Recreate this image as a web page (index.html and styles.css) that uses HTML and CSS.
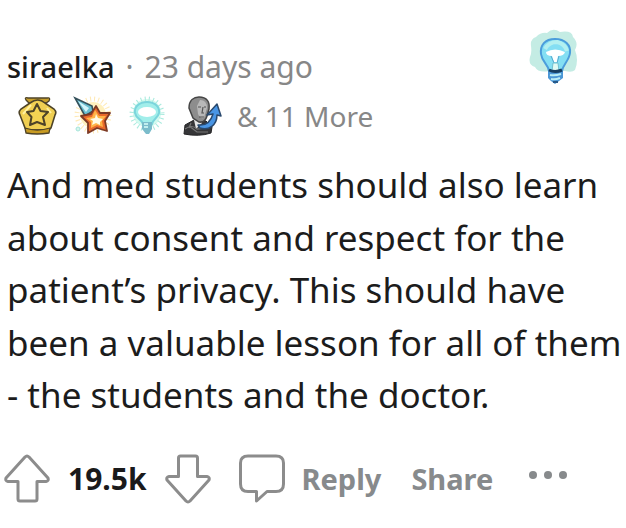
FILE: index.html
```html
<!DOCTYPE html>
<html lang="en">
<head>
<meta charset="utf-8">
<meta name="viewport" content="width=device-width, initial-scale=1">
<title>Comment by siraelka</title>
<link rel="stylesheet" href="styles.css">
</head>
<body>
<article class="comment">
  <header class="header">
    <div class="meta">
      <div class="byline">
        <a class="author" href="#">siraelka</a>
        <span class="dot">·</span>
        <time class="age">23 days ago</time>
      </div>
      <div class="awards">
        <svg class="award" viewBox="0 0 40 40" aria-hidden="true">
          <path d="M9 4Q7 1 11 2H30Q34 1 32 5L29 7H12Z" fill="#c9a02c" stroke="#4d4328" stroke-width="1.3"/>
          <path d="M13 7Q21 1 28 7L37 13Q40 16 38 19L34 32Q33 34 29 34H12Q9 34 8 32L3 19Q1 16 4 13Z" fill="#f0cf52" stroke="#4d4328" stroke-width="1.6"/>
          <path d="M8 32L9 37Q20 39 32 37L33 32Q20 36 8 32Z" fill="#c89b22" stroke="#4d4328" stroke-width="1.3"/>
          <path d="M6 18L14 9M30 12L34 17" stroke="#fff0a0" stroke-width="2"/>
          <path d="M20 8L23.500 15L31 16L26 21L28 29L20 26L13 29L14.500 21L10 16L16.500 15Z" fill="#f4d353" stroke="#4d4328" stroke-width="2" stroke-linejoin="round"/>
        </svg>
        <svg class="award" viewBox="0 0 40 40" aria-hidden="true">
          <circle cx="21" cy="19" r="13" fill="#fff0bd"/>
          <circle cx="21" cy="19" r="16" fill="none" stroke="#ffe9b4" stroke-width="5" stroke-dasharray="1 3"/>
          <path d="M3 2L20 10L21 15L13 20Z" fill="#69bfd0" stroke="#35515b" stroke-width="1.600"/>
          <path d="M6 5L17 12L14 16Z" fill="#d4f5fa"/>
          <path d="M24 10L28 17L38 17L33 25L35 35L25 32L16 37L16 27L9 20L19 18Z" fill="#ea6a2a" stroke="#7c3a26" stroke-width="1.800" stroke-linejoin="round"/>
          <path d="M23 14L27 20L34 20L30 25L31 31L25 29L19 32L19 26L14 22L20 21Z" fill="#ffb447"/>
          <path d="M24 18L26 22L31 23L28 26L28 29L24 27L20 29L21 25L18 23L23 22Z" fill="#fffbe6"/>
          <circle cx="6" cy="33" r="2" fill="#d9f5ee" stroke="#a5e5d9"/>
        </svg>
        <svg class="award" viewBox="0 0 40 40" aria-hidden="true">
          <circle cx="20" cy="17" r="14" fill="#d3faef"/>
          <circle cx="20" cy="18" r="15" fill="none" stroke="#a9eade" stroke-width="5" stroke-dasharray="1 3"/>
          <path d="M20 6C12 6 7 11 8 17C9 23 15 23 16 28H25C26 23 31 22 32 17C33 11 28 6 20 6Z" fill="#a1eeea" stroke="#7bd5dc" stroke-width="2"/>
          <ellipse cx="20" cy="16" rx="9" ry="5" fill="#fff"/>
          <path d="M15 26H25V33L22 38H19L15 33Z" fill="#7bbccb"/>
          <path d="M17 28H21M17 31H21" stroke="#c1eeee" stroke-width="2"/>
        </svg>
        <svg class="award" viewBox="0 0 40 40" aria-hidden="true">
          <path d="M2 38L3 29L12 24L24 25L30 31L29 37Q17 41 2 38Z" fill="#363638" stroke="#242426"/>
          <path d="M12 24L14 33L20 27L18 22Z" fill="#e6e6e6"/>
          <path d="M7 12C7 4 12 1 17 1C25 1 28 6 27 13L25 20Q23 27 17 26L11 22Z" fill="#8d8d8d" stroke="#454545" stroke-width="1.500"/>
          <path d="M18 4Q25 4 25 12L22 22Q18 23 16 18L15 10Z" fill="#b8b8b8"/>
          <path d="M16 11H19M22 11H24M21 11L20 17H22M17 21H22" fill="none" stroke="#555" stroke-width="1.200"/>
          <path d="M3 33Q10 28 15 33L25 32M7 30L15 36H26M9 27L7 32" fill="none" stroke="#777" stroke-width="1.200"/>
          <path d="M16 29C25 30 29 25 31 18L25 19L35 8L39 20L35 19C35 29 27 35 18 32Z" fill="#4995e4" stroke="#29496e" stroke-width="1.500" stroke-linejoin="round"/>
        </svg>
        <span class="more">&amp; 11 More</span>
      </div>
    </div>
    <svg class="badge" viewBox="0 0 50 56" aria-label="Award" role="img">
      <path d="M18 5Q24-1 31 4Q43 2 44 9Q50 15 46 22Q50 32 46 42Q43 45 36 43L20 43Q9 45 6 39Q-1 37 1 29Q3 25 2 18Q1 11 7 9Q12 4 18 5Z" fill="#c4ece4"/>
      <path d="M26 11C16 11 11 17 12 26C13 34 19 36 20 43H33C34 36 40 33 41 25C42 17 36 11 26 11Z" fill="#84dff3" stroke="#4b9ddb" stroke-width="2"/>
      <path d="M16 21Q20 14 28 14Q36 16 38 23" fill="none" stroke="#b3f0f0" stroke-width="4"/>
      <path d="M17 24Q26 19 36 24Q35 28 29 28L28 34H25L23 28Q17 28 17 24Z" fill="#fff"/>
      <path d="M22 28L25 35M30 28L28 35" stroke="#5aa9ce"/>
      <path d="M23 43L24 35H29L30 43Z" fill="#e0faf4" stroke="#70bfd0"/>
      <path d="M19 41Q26 45 34 41V50L30 53L26 56L22 53L19 50Z" fill="#4b97d6"/>
      <path d="M20 42Q26 45 33 42" fill="none" stroke="#173e60" stroke-width="3"/>
      <path d="M21 47Q26 48 32 46M22 51Q26 52 31 50" fill="none" stroke="#b9edf5" stroke-width="2"/>
      <path d="M24 54H29" stroke="#285a8a" stroke-width="2"/>
    </svg>
  </header>
  <p class="body">And med students should also learn about consent and respect for the patient’s privacy. This should have been a valuable lesson for all of them - the students and the doctor.</p>
  <footer class="actions">
    <button class="action" type="button" aria-label="Upvote">
      <svg class="arrow" viewBox="0 0 46 50" aria-hidden="true"><path d="M21 3Q23 1 25 3L44 24Q45 27 42 27.500H33V45Q33 47 31 47H16Q14 47 14 45V27.500H4Q1 27 2 24Z"/></svg>
    </button>
    <span class="score">19.5k</span>
    <button class="action" type="button" aria-label="Downvote">
      <svg class="arrow" viewBox="0 0 46 50" aria-hidden="true"><path d="M21 47Q23 49 25 47L44 26Q45 23 42 22.500H32.500V4Q32.500 2 30.500 2H15.500Q13.500 2 13.500 4V22.500H4Q1 23 2 26Z"/></svg>
    </button>
    <button class="action reply" type="button">
      <svg class="arrow" viewBox="0 0 46 50" aria-hidden="true"><path d="M9 2H37Q44.500 2 44.500 9V30Q44.500 37.500 37 37.500H28L17.500 47V37.500H9Q1.500 37.500 1.500 30V9Q1.500 2 9 2Z"/></svg>
      <span>Reply</span>
    </button>
    <button class="action share" type="button">Share</button>
    <button class="action overflow" type="button" aria-label="More options">
      <svg class="dots" viewBox="0 0 38 8" aria-hidden="true"><circle cx="4" cy="4" r="4"/><circle cx="19" cy="4" r="4"/><circle cx="34" cy="4" r="4"/></svg>
    </button>
  </footer>
</article>
</body>
</html>
```
FILE: styles.css
```css
* { box-sizing: border-box; }
body {
  margin: 0;
  background: #fff;
  color: #1c1c1c;
  font-family: "Noto Sans", "Open Sans", sans-serif;
}
.comment { padding: 28px 0 0 4px; }
.header {
  display: flex;
  justify-content: space-between;
  padding-right: 47px;
}
.meta { padding-top: 15px; }
.byline {
  display: flex;
  align-items: baseline;
  gap: 11px;
  padding-left: 3px;
  font-size: 30px;
  line-height: 48px;
  color: #878787;
}
.author {
  color: #1a1a1b;
  font-size: 29px;
  font-weight: 500;
  text-decoration: none;
}
.awards {
  display: flex;
  align-items: center;
  gap: 15px;
  padding-left: 13px;
  line-height: 50px;
}
.award { width: 40px; height: 40px; }
.more { color: #878787; font-size: 28px; }
.badge { width: 50px; height: 56px; }
.body {
  margin: 18px 0 0;
  padding-left: 3px;
  font-size: 35px;
  line-height: 1.5;
}
.actions {
  display: flex;
  align-items: center;
  padding-top: 32px;
}
.action {
  display: flex;
  align-items: center;
  gap: 17px;
  padding: 0;
  border: 0;
  background: none;
  color: #878a8c;
  font: 700 29px/50px "Noto Sans", sans-serif;
  cursor: pointer;
}
.arrow {
  width: 46px;
  height: 50px;
  fill: none;
  stroke: #8c8c8c;
  stroke-width: 3;
  stroke-linejoin: round;
}
.score {
  margin: 0 18px;
  color: #1a1a1b;
  font-size: 30px;
  font-weight: 700;
}
.reply { margin-left: 28px; }
.share { margin-left: 30px; }
.overflow { margin-left: 36px; padding-bottom: 8px; }
.dots { width: 38px; height: 8px; fill: #878a8c; }
```
